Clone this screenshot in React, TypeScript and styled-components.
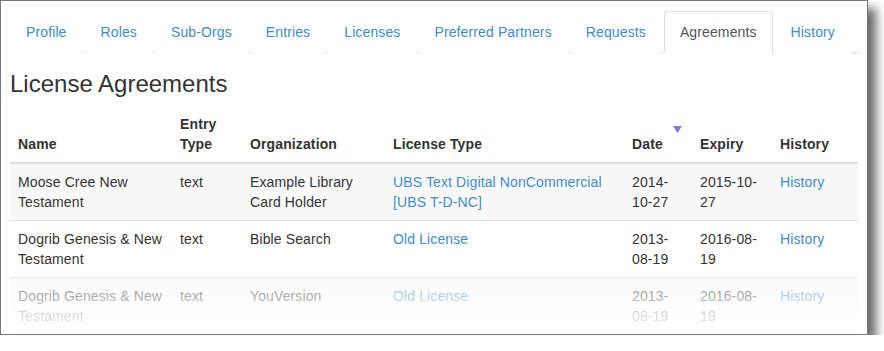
import React from "react";
import styled, { createGlobalStyle } from "styled-components";

const GlobalStyle = createGlobalStyle`
  html, body {
    margin: 0;
    padding: 0;
    background: #ffffff;
  }
  body {
    font-family: "Liberation Sans", Arial, Helvetica, sans-serif;
    font-size: 14px;
    line-height: 20px;
    letter-spacing: 0.12px;
    color: #333333;
  }
  * {
    box-sizing: border-box;
  }
`;

const Window = styled.div`
  position: relative;
  width: 868px;
  height: 335px;
  padding: 10px 9px 0 9px;
  background: #ffffff;
  border: 1px solid #777777;
  box-shadow: 8px 8px 10px rgba(0, 0, 0, 0.6);
  overflow: hidden;
`;

const Tabs = styled.ul`
  display: flex;
  margin: 0;
  padding: 0;
  list-style: none;
  border-bottom: 1px solid #dddddd;
`;

const TabItem = styled.li`
  margin-bottom: -1px;
  margin-right: 2px;
`;

const TabLink = styled.a<{ $active?: boolean }>`
  display: block;
  padding: 10px 15px;
  line-height: 20px;
  border: 1px solid ${({ $active }) => ($active ? "#dddddd" : "transparent")};
  border-bottom-color: ${({ $active }) => ($active ? "#ffffff" : "transparent")};
  border-radius: 4px 4px 0 0;
  background: #ffffff;
  color: ${({ $active }) => ($active ? "#555555" : "#428bca")};
  text-decoration: none;
  cursor: pointer;
`;

const Title = styled.h3`
  margin: 18px 0 9px 0;
  font-size: 24px;
  font-weight: 400;
  line-height: 26px;
  letter-spacing: 0;
  color: #333333;
`;

const Table = styled.table`
  width: 848px;
  border-collapse: collapse;
  border-spacing: 0;
  table-layout: fixed;
`;

const Th = styled.th<{ $width: number }>`
  width: ${({ $width }) => $width}px;
  padding: 8px;
  text-align: left;
  vertical-align: bottom;
  font-weight: 700;
  border-bottom: 2px solid #dddddd;
`;

const HeadInner = styled.span`
  position: relative;
  display: inline-block;
`;

const SortCaret = styled.svg`
  position: absolute;
  top: -8px;
  right: -19px;
`;

const Row = styled.tr<{ $striped?: boolean }>`
  background: ${({ $striped }) => ($striped ? "#f9f9f9" : "#ffffff")};
`;

const Td = styled.td`
  padding: 8px;
  vertical-align: top;
  border-top: 1px solid #dddddd;
`;

const Link = styled.a`
  color: #428bca;
  text-decoration: none;
  cursor: pointer;
`;

const Fade = styled.div`
  position: absolute;
  left: 0;
  right: 0;
  bottom: 0;
  height: 58px;
  background: linear-gradient(
    to bottom,
    rgba(255, 255, 255, 0.35) 0%,
    rgba(255, 255, 255, 0.8) 65%,
    rgba(255, 255, 255, 0.95) 100%
  );
  pointer-events: none;
`;

const tabs = [
  "Profile",
  "Roles",
  "Sub-Orgs",
  "Entries",
  "Licenses",
  "Preferred Partners",
  "Requests",
  "Agreements",
  "History",
];

const columns = [
  { label: "Name", width: 162 },
  { label: "Entry Type", width: 70 },
  { label: "Organization", width: 143 },
  { label: "License Type", width: 239 },
  { label: "Date", width: 68, sorted: true },
  { label: "Expiry", width: 80 },
  { label: "History", width: 86 },
];

const agreements = [
  {
    name: "Moose Cree New Testament",
    type: "text",
    org: "Example Library Card Holder",
    license: "UBS Text Digital NonCommercial [UBS T-D-NC]",
    date: "2014-10-27",
    expiry: "2015-10-27",
  },
  {
    name: "Dogrib Genesis & New Testament",
    type: "text",
    org: "Bible Search",
    license: "Old License",
    date: "2013-08-19",
    expiry: "2016-08-19",
  },
  {
    name: "Dogrib Genesis & New Testament",
    type: "text",
    org: "YouVersion",
    license: "Old License",
    date: "2013-08-19",
    expiry: "2016-08-19",
  },
];

export default function App() {
  return (
    <>
      <GlobalStyle />
      <Window>
        <Tabs>
          {tabs.map((tab) => (
            <TabItem key={tab}>
              <TabLink $active={tab === "Agreements"}>{tab}</TabLink>
            </TabItem>
          ))}
        </Tabs>

        <Title>License Agreements</Title>

        <Table>
          <thead>
            <tr>
              {columns.map((col) => (
                <Th key={col.label} $width={col.width}>
                  <HeadInner>
                    {col.label}
                    {col.sorted && (
                      <SortCaret width="9" height="7" viewBox="0 0 9 7">
                        <path d="M0 0 L9 0 L4.5 7 Z" fill="#7b7bd9" />
                      </SortCaret>
                    )}
                  </HeadInner>
                </Th>
              ))}
            </tr>
          </thead>
          <tbody>
            {agreements.map((a, i) => (
              <Row key={i} $striped={i % 2 === 0}>
                <Td>{a.name}</Td>
                <Td>{a.type}</Td>
                <Td>{a.org}</Td>
                <Td>
                  <Link>{a.license}</Link>
                </Td>
                <Td>{a.date}</Td>
                <Td>{a.expiry}</Td>
                <Td>
                  <Link>History</Link>
                </Td>
              </Row>
            ))}
          </tbody>
        </Table>

        <Fade />
      </Window>
    </>
  );
}
